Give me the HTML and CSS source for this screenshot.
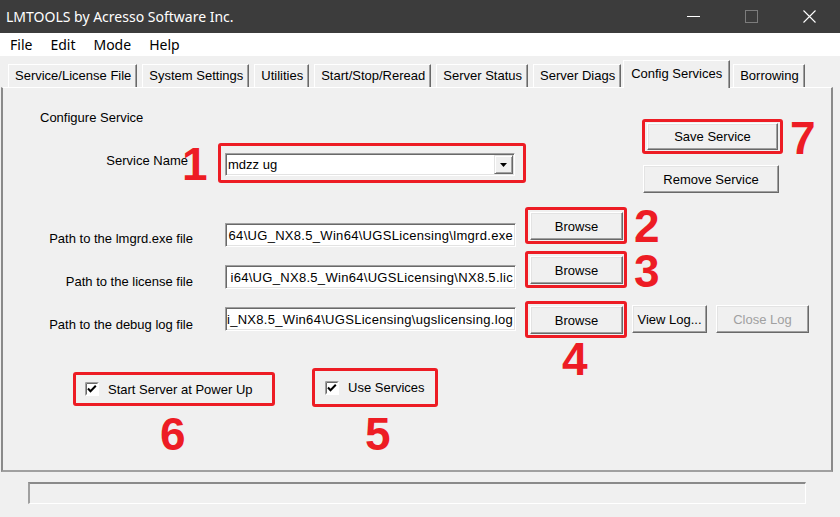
FILE: index.html
```
<!DOCTYPE html>
<html>
<head>
<meta charset="utf-8">
<title>LMTOOLS</title>
<link rel="stylesheet" href="styles.css">
</head>
<body>
<div class="titlebar">
  <span class="title">LMTOOLS by Acresso Software Inc.</span>
  <div class="winctl">
    <span class="wbtn"><svg width="13" height="13" viewBox="0 0 13 13"><path d="M0 6.5h13" stroke="#fff" stroke-width="1"/></svg></span>
    <span class="wbtn"><svg width="13" height="13" viewBox="0 0 13 13"><rect x="0.5" y="0.5" width="12" height="12" fill="none" stroke="#7c7c7c"/></svg></span>
    <span class="wbtn"><svg width="13" height="13" viewBox="0 0 13 13"><path d="M0.5 0.5L12.5 12.5M12.5 0.5L0.5 12.5" stroke="#fff" stroke-width="1.1"/></svg></span>
  </div>
</div>
<div class="menubar">
  <span>File</span><span>Edit</span><span>Mode</span><span>Help</span>
</div>
<div class="tabs">
  <span class="tab">Service/License File</span>
  <span class="tab">System Settings</span>
  <span class="tab">Utilities</span>
  <span class="tab">Start/Stop/Reread</span>
  <span class="tab">Server Status</span>
  <span class="tab">Server Diags</span>
  <span class="tab active">Config Services</span>
  <span class="tab">Borrowing</span>
</div>
<div class="panel">
  <div class="head">
    <div class="head-left">
      <div class="section-title">Configure Service</div>
      <div class="svc-row">
        <span class="svc-label">Service Name</span>
        <div class="mark mark-combo">
          <div class="combo">
            <span class="combo-text">mdzz ug</span>
            <span class="combo-btn"><svg width="7" height="4" viewBox="0 0 7 4"><polygon points="0,0 7,0 3.5,4" fill="#000"/></svg></span>
          </div>
        </div>
      </div>
    </div>
    <div class="head-right">
      <div class="mark mark-save"><span class="btn btn-save">Save Service</span></div>
      <span class="btn btn-remove">Remove Service</span>
    </div>
  </div>

  <div class="path-row r1">
    <span class="path-label">Path to the lmgrd.exe file</span>
    <div class="field"><span>64\UG_NX8.5_Win64\UGSLicensing\lmgrd.exe</span></div>
    <div class="mark mark-browse"><span class="btn btn-browse">Browse</span></div>
  </div>
  <div class="path-row r2">
    <span class="path-label">Path to the license file</span>
    <div class="field"><span>i64\UG_NX8.5_Win64\UGSLicensing\NX8.5.lic</span></div>
    <div class="mark mark-browse"><span class="btn btn-browse">Browse</span></div>
  </div>
  <div class="path-row r3">
    <span class="path-label">Path to the debug log file</span>
    <div class="field"><span>i_NX8.5_Win64\UGSLicensing\ugslicensing.log</span></div>
    <div class="mark mark-browse"><span class="btn btn-browse">Browse</span></div>
    <span class="btn btn-view">View Log...</span>
    <span class="btn btn-close disabled">Close Log</span>
  </div>

  <div class="checks">
    <div class="mark mark-check6">
      <span class="cb"><svg width="14" height="14" viewBox="0 0 14 14"><rect x="0" y="0" width="14" height="14" fill="#fff"/><path d="M0.5 13.5V0.5H13.5" fill="none" stroke="#a0a0a0"/><path d="M1.5 12.5V1.5H12.5" fill="none" stroke="#696969"/><path d="M3 6.5L5.5 9.2L10.8 3.8" fill="none" stroke="#000" stroke-width="2"/></svg></span>
      <span>Start Server at Power Up</span>
    </div>
    <div class="mark mark-check5">
      <span class="cb"><svg width="14" height="14" viewBox="0 0 14 14"><rect x="0" y="0" width="14" height="14" fill="#fff"/><path d="M0.5 13.5V0.5H13.5" fill="none" stroke="#a0a0a0"/><path d="M1.5 12.5V1.5H12.5" fill="none" stroke="#696969"/><path d="M3 6.5L5.5 9.2L10.8 3.8" fill="none" stroke="#000" stroke-width="2"/></svg></span>
      <span>Use Services</span>
    </div>
  </div>
</div>
<div class="statusbar"><div class="status-box"></div></div>

<div class="notes">
  <span class="note n1">1</span>
  <span class="note n7">7</span>
  <span class="note n23">2
3</span>
  <span class="note n4">4</span>
  <span class="note n6">6</span>
  <span class="note n5">5</span>
</div>
</body>
</html>
```

FILE: styles.css
```
html, body {
  margin: 0;
  padding: 0;
}
body {
  width: 840px;
  height: 517px;
  overflow: hidden;
  background: #f0f0f0;
  font: 13px "Liberation Sans", Arial, sans-serif;
  color: #000;
  position: relative;
}

/* title bar */
.titlebar {
  height: 33px;
  background: #3c3c3c;
  display: flex;
  align-items: center;
  color: #fff;
}
.title {
  flex: 1;
  padding-left: 6px;
  font: 14px "Noto Sans", sans-serif;
}
.winctl {
  display: flex;
  height: 33px;
  padding-right: 2px;
}
.wbtn {
  width: 58px;
  display: flex;
  align-items: center;
  justify-content: center;
}
.wbtn svg { display: block; }

/* menu */
.menubar {
  height: 23px;
  background: #fff;
  display: flex;
  align-items: center;
  gap: 18px;
  padding-left: 10px;
  font: 14px "Noto Sans", sans-serif;
}

/* tabs */
.tabs {
  height: 31px;
  display: flex;
  align-items: flex-end;
  padding-left: 8px;
  position: relative;
  z-index: 2;
}
.tab {
  box-sizing: border-box;
  height: 23px;
  line-height: 21px;
  padding: 0 5px 0 6px;
  border-top: 1px solid #fff;
  border-left: 1px solid #fff;
  border-right: 1px solid #696969;
  box-shadow: inset -1px 0 #a0a0a0;
  margin-right: 5px;
  white-space: nowrap;
}
.tab.active {
  height: 28px;
  line-height: 25px;
  margin: 0 3px -1px -3px;
  padding: 0 7px 0 7px;
  background: #f0f0f0;
}

/* panel */
.panel {
  box-sizing: border-box;
  margin-left: 1px;
  width: 832px;
  height: 385px;
  border-top: 1px solid #fff;
  border-left: 2px solid #8a8a8a;
  border-right: 2px solid #8a8a8a;
  border-bottom: 2px solid #a0a0a0;
}

.head {
  display: flex;
  align-items: flex-start;
  height: 105px;
}
.head-left { width: 530px; }
.section-title {
  margin: 22px 0 0 37px;
  line-height: 16px;
}
.svc-row {
  display: flex;
  align-items: flex-start;
  margin-top: 17px;
}
.svc-label {
  width: 185px;
  text-align: right;
  line-height: 16px;
  margin-top: 10px;
}

.mark {
  border: 3px solid #ed1c24;
  border-radius: 3px;
}
.mark-combo {
  margin-left: 30px;
  padding: 7px 8px 4px 4px;
}
.combo {
  box-sizing: border-box;
  width: 290px;
  height: 23px;
  display: flex;
  align-items: center;
  background: #fff;
  border: 1px solid;
  border-color: #a0a0a0 #fff #fff #a0a0a0;
  box-shadow: inset 1px 1px #696969, inset -1px -1px #e3e3e3;
}
.combo-text {
  flex: 1;
  padding-left: 2px;
}
.combo-btn {
  box-sizing: border-box;
  width: 19px;
  height: 19px;
  margin-right: 1px;
  display: flex;
  align-items: center;
  justify-content: center;
  background: #f0f0f0;
  border: 1px solid;
  border-color: #e3e3e3 #696969 #696969 #e3e3e3;
  box-shadow: inset 1px 1px #fff, inset -1px -1px #a0a0a0;
}
.combo-btn svg { display: block; }

.head-right {
  margin: 31px 0 0 109px;
  display: flex;
  flex-direction: column;
  align-items: flex-start;
}

.btn {
  box-sizing: border-box;
  display: flex;
  align-items: center;
  justify-content: center;
  background: #f0f0f0;
  border: 1px solid;
  border-color: #fff #696969 #696969 #fff;
  box-shadow: inset -1px -1px #a0a0a0, inset 1px 1px #e3e3e3;
  white-space: nowrap;
}
.btn.disabled { color: #a0a0a0; }
.mark-save { padding: 1px 2px; }
.btn-save { width: 131px; height: 27px; }
.btn-remove { width: 136px; height: 28px; margin: 11px 0 0 1px; }

/* path rows */
.path-row {
  display: flex;
  align-items: flex-start;
  height: 37px;
}
.r1 { margin-top: 14px; }
.r2 { margin-top: 7px; }
.r3 { margin-top: 13px; }
.path-label {
  width: 190px;
  text-align: right;
  line-height: 16px;
  white-space: nowrap;
}
.r1 .path-label { margin-top: 24px; }
.r2 .path-label { margin-top: 23px; }
.r3 .path-label { margin-top: 16px; }

.field {
  box-sizing: border-box;
  margin-left: 32px;
  width: 291px;
  height: 24px;
  display: flex;
  align-items: center;
  justify-content: flex-end;
  overflow: hidden;
  white-space: nowrap;
  background: #fff;
  padding: 0 2px 0 2px;
  letter-spacing: 0.3px;
  border: 1px solid;
  border-color: #a0a0a0 #fff #fff #a0a0a0;
  box-shadow: inset 1px 1px #696969, inset -1px -1px #e3e3e3;
}
.field span { flex: none; }
.r1 .field { margin-top: 16px; }
.r2 .field { margin-top: 14px; }
.r3 .field { margin-top: 6px; }

.mark-browse {
  margin-left: 9px;
  padding: 2px 1px 1px 2px;
}
.btn-browse { width: 93px; height: 28px; }
.btn-view { width: 75px; height: 28px; margin: 4px 0 0 5px; }
.btn-close { width: 93px; height: 28px; margin: 4px 0 0 9px; }

/* checkboxes */
.checks {
  display: flex;
  align-items: flex-start;
  margin-top: 30px;
}
.mark-check6, .mark-check5 {
  box-sizing: border-box;
  display: flex;
  align-items: center;
  gap: 9px;
}
.mark-check6 {
  margin: 4px 0 0 70px;
  width: 202px;
  height: 34px;
  padding-left: 9px;
}
.mark-check5 {
  margin-left: 37px;
  width: 126px;
  height: 39px;
  padding-left: 10px;
}
.cb svg { display: block; }

/* status */
.statusbar {
  padding: 10px 0 0 28px;
}
.status-box {
  box-sizing: border-box;
  width: 778px;
  height: 22px;
  border-top: 2px solid #8a8a8a;
  border-left: 2px solid #a0a0a0;
  border-right: 1px solid #fff;
  border-bottom: 1px solid #fff;
}

/* annotation numbers */
.note {
  position: absolute;
  font: bold 46px/40px "Liberation Sans", Arial, sans-serif;
  color: #ed1c24;
}
.n1 { left: 182px; top: 144px; }
.n7 { left: 790px; top: 118px; }
.n23 { left: 634px; top: 204px; line-height: 45px; white-space: pre-line; }
.n4 { left: 562px; top: 339px; }
.n6 { left: 160px; top: 414px; }
.n5 { left: 365px; top: 414px; }
```
